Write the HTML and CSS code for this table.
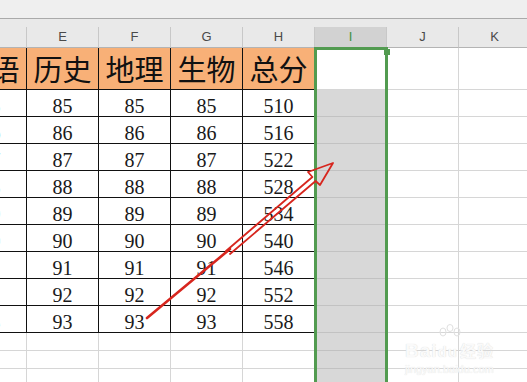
FILE: index.html
```html
<!DOCTYPE html>
<html lang="zh">
<head>
<meta charset="utf-8">
<link rel="stylesheet" href="styles.css">
</head>
<body>
<div class="sheet">
  <div class="topbar"></div>
  <div class="strip"></div>
  <div class="grid">
    <div class="h">D</div><div class="h">E</div><div class="h">F</div><div class="h">G</div><div class="h">H</div><div class="h hsel">I</div><div class="h">J</div><div class="h">K</div>

    <div class="t">英语</div><div class="t">历史</div><div class="t">地理</div><div class="t">生物</div><div class="t">总分</div><div class="selw"></div><div class="e tall"></div><div class="e tall"></div>

    <div class="n d">85</div><div class="n">85</div><div class="n">85</div><div class="n">85</div><div class="n">510</div><div class="sel"></div><div class="e"></div><div class="e"></div>
    <div class="n d">86</div><div class="n">86</div><div class="n">86</div><div class="n">86</div><div class="n">516</div><div class="sel"></div><div class="e"></div><div class="e"></div>
    <div class="n d">87</div><div class="n">87</div><div class="n">87</div><div class="n">87</div><div class="n">522</div><div class="sel"></div><div class="e"></div><div class="e"></div>
    <div class="n d">88</div><div class="n">88</div><div class="n">88</div><div class="n">88</div><div class="n">528</div><div class="sel"></div><div class="e"></div><div class="e"></div>
    <div class="n d">89</div><div class="n">89</div><div class="n">89</div><div class="n">89</div><div class="n">534</div><div class="sel"></div><div class="e"></div><div class="e"></div>
    <div class="n d">90</div><div class="n">90</div><div class="n">90</div><div class="n">90</div><div class="n">540</div><div class="sel"></div><div class="e"></div><div class="e"></div>
    <div class="n d">91</div><div class="n">91</div><div class="n">91</div><div class="n">91</div><div class="n">546</div><div class="sel"></div><div class="e"></div><div class="e"></div>
    <div class="n d">92</div><div class="n">92</div><div class="n">92</div><div class="n">92</div><div class="n">552</div><div class="sel"></div><div class="e"></div><div class="e"></div>
    <div class="n d">93</div><div class="n">93</div><div class="n">93</div><div class="n">93</div><div class="n">558</div><div class="sel"></div><div class="e"></div><div class="e"></div>

    <div class="e"></div><div class="e"></div><div class="e"></div><div class="e"></div><div class="e"></div><div class="sel"></div><div class="e"></div><div class="e"></div>
    <div class="e"></div><div class="e"></div><div class="e"></div><div class="e"></div><div class="e"></div><div class="sel"></div><div class="e"></div><div class="e"></div>
    <div class="e"></div><div class="e"></div><div class="e"></div><div class="e"></div><div class="e"></div><div class="sel"></div><div class="e"></div><div class="e"></div>
  </div>

  <div class="selection"></div>
  <div class="handle"></div>

  <div class="watermark">
    <svg class="paw" width="30" height="22" viewBox="0 0 30 22">
      <g fill="none" stroke="#e0e0e0" stroke-width="1">
        <ellipse cx="8" cy="8" rx="3" ry="4"/>
        <ellipse cx="15" cy="4" rx="3" ry="3.5"/>
        <ellipse cx="22" cy="8" rx="3" ry="4"/>
      </g>
    </svg>
    <div class="wm-main"><span class="wm-bai">Bai</span><span class="wm-du">du</span><span class="wm-jy">经验</span></div>
    <div class="wm-sub">jingyan.baidu.com</div>
  </div>

  <svg class="arrow" width="527" height="382" viewBox="0 0 527 382">
    <g fill="none" stroke="#d7261e" stroke-linecap="round" stroke-linejoin="round">
      <path d="M147 318 L230 249" stroke-width="2.6"/>
      <path d="M226 251 L312.4 177 L308 172 L333 163 L320 185 L315.6 181 L230 254" stroke-width="1.8"/>
    </g>
  </svg>
</div>
</body>
</html>
```

FILE: styles.css
```css
html, body {
  margin: 0;
  padding: 0;
  background: #ffffff;
}

.sheet {
  position: relative;
  width: 527px;
  height: 382px;
  overflow: hidden;
  background: #ffffff;
}

.topbar {
  height: 18px;
  background: #efefef;
  border-bottom: 1px solid #aaaaaa;
}

.strip {
  height: 8px;
  background: #e9e9e9;
}

.grid {
  display: grid;
  grid-template-columns: repeat(8, 72px);
  grid-template-rows: 21px 42px repeat(9, 27px) repeat(3, 18px);
  margin-left: -45px;
}

.grid > div {
  box-sizing: border-box;
  border-right: 1px solid #d6d6d6;
  border-bottom: 1px solid #d6d6d6;
  text-align: center;
  overflow: hidden;
  white-space: nowrap;
}

.grid > .h {
  background: #e9e9e9;
  border-right: 1px solid #c8c8c8;
  border-bottom: 1px solid #b4b4b4;
  font-family: "Liberation Sans", Arial, sans-serif;
  font-size: 13px;
  line-height: 20px;
  color: #4a4a4a;
}

.grid > .hsel {
  background: #d2d2d2;
  color: #3f8f3f;
}

.grid > .t {
  background: #f8b077;
  border-right: 1px solid #111111;
  border-bottom: 1px solid #111111;
  font-family: "Noto Sans CJK SC", sans-serif;
  font-size: 29px;
  line-height: 41px;
  color: #111111;
}

.grid > .n {
  border-right: 1px solid #111111;
  border-bottom: 1px solid #111111;
  font-family: "Liberation Serif", "Times New Roman", serif;
  font-size: 20px;
  line-height: 20px;
  padding-top: 6px;
  color: #1a1a1a;
}

.grid > .d {
  color: #5aa8d8;
}

.grid > .sel {
  background: #d8d8d8;
  border-bottom: 1px solid #c2c2c2;
  border-right: 1px solid #c2c2c2;
}

.grid > .selw {
  background: #ffffff;
}

.selection {
  position: absolute;
  left: 314px;
  top: 47px;
  width: 68px;
  height: 340px;
  border: 3px solid #529b50;
}

.handle {
  position: absolute;
  left: 384px;
  top: 49px;
  width: 6px;
  height: 6px;
  background: #529b50;
}

.watermark {
  position: absolute;
  left: 405px;
  top: 324px;
  width: 100px;
  font-family: "Liberation Sans", Arial, sans-serif;
  color: #fafafa;
}

.paw {
  position: absolute;
  left: 30px;
  top: 0;
}

.wm-main {
  margin-top: 17px;
  font-size: 19px;
  line-height: 19px;
  font-weight: bold;
  text-shadow: 0 0 1px #d4d4d4;
  letter-spacing: 1px;
}

.wm-du {
  font-size: 15px;
}

.wm-jy {
  font-family: "Noto Sans CJK SC", sans-serif;
  font-size: 16px;
  margin-left: 2px;
}

.wm-sub {
  font-size: 11px;
  line-height: 12px;
  margin-top: 2px;
  text-shadow: 0 0 1px #d8d8d8;
}

.arrow {
  position: absolute;
  left: 0;
  top: 0;
  pointer-events: none;
}
```
